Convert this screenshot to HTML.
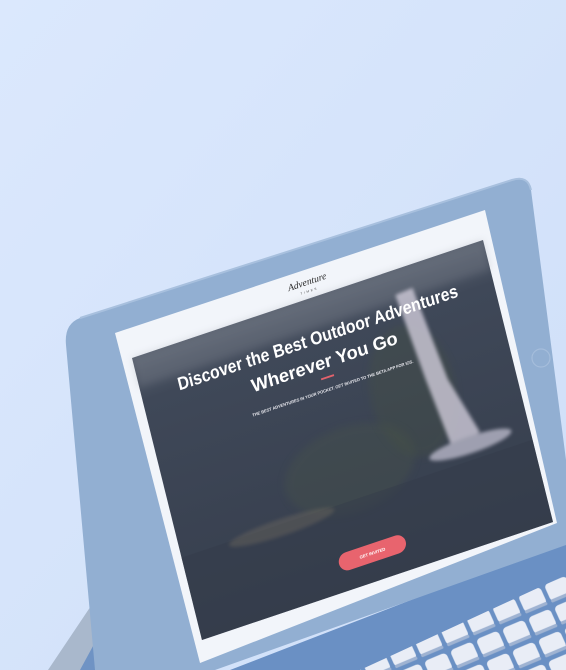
<!DOCTYPE html>
<html><head><meta charset="utf-8"><style>
html,body{margin:0;padding:0;width:566px;height:670px;overflow:hidden;background:#d7e5fc}
svg{display:block}
</style></head><body>
<svg width="566" height="670" viewBox="0 0 566 670" xmlns="http://www.w3.org/2000/svg">
<defs>
<linearGradient id="bg" x1="0" y1="0" x2="1" y2="1"><stop offset="0" stop-color="#dbe8fd"/><stop offset="1" stop-color="#cfdff8"/></linearGradient>
<linearGradient id="img" x1="0" y1="0" x2="0" y2="1"><stop offset="0" stop-color="#5a6270"/><stop offset="0.15" stop-color="#3f4858"/><stop offset="1" stop-color="#363e4d"/></linearGradient>
<filter id="bl" x="-50%" y="-50%" width="200%" height="200%"><feGaussianBlur stdDeviation="6"/></filter>
<filter id="bl2" x="-50%" y="-50%" width="200%" height="200%"><feGaussianBlur stdDeviation="3"/></filter>
<pattern id="keys" width="26" height="22" patternUnits="userSpaceOnUse" patternTransform="matrix(1,-0.42,0.45,1,0,0)"><rect x="2" y="2" width="22" height="17" rx="4" fill="#e9edf6"/><rect x="2" y="17" width="22" height="3" rx="1.5" fill="#9fb3d2"/></pattern>
</defs>
<rect width="566" height="670" fill="url(#bg)"/>
<!-- stand -->
<polygon points="48,670 105,585 128,575 140,670" fill="#a9b8cc"/>
<polygon points="80,670 118,600 140,600 150,670" fill="#6f93c4"/>
<!-- keyboard -->
<polygon points="230,670 566,540 566,670" fill="#6a90c4"/>
<polygon points="360,670 566,575 566,670" fill="url(#keys)"/>
<!-- tablet frame -->
<path d="M80,318 L512,180 Q528,175 531,190 L566,460 L566,545 L215,670 L95,670 L66,345 Q64,324 80,318 Z" fill="#92afd2"/>
<path d="M80,318 L512,180 Q528,175 531,190" fill="none" stroke="#a8c0de" stroke-width="2"/>
<circle cx="541" cy="358" r="9" fill="none" stroke="#a5bddb" stroke-width="1.2"/>
<!-- screen white -->
<polygon points="115,333 485,210 557,523 200,663" fill="#f2f5fa"/>
<!-- image -->
<g transform="matrix(0.585,-0.1967,0.1458,0.5875,132,358)">
<rect x="0" y="0" width="600" height="480" fill="url(#img)"/>
<rect x="0" y="0" width="600" height="50" fill="#8a8f9a" opacity="0.25" filter="url(#bl)"/>
<ellipse cx="300" cy="290" rx="110" ry="70" fill="#4a5548" opacity="0.35" filter="url(#bl)"/>
<ellipse cx="430" cy="200" rx="70" ry="110" fill="#46523f" opacity="0.3" filter="url(#bl)"/>
<g filter="url(#bl2)" opacity="0.8">
<polygon points="440,40 470,38 490,200 520,300 470,310 455,190" fill="#cfcbd9"/>
<ellipse cx="500" cy="315" rx="70" ry="14" fill="#b8b7c8"/>
</g>
<rect x="0" y="340" width="600" height="140" fill="#343c4a" opacity="0.5"/>
<ellipse cx="170" cy="345" rx="90" ry="14" fill="#7a7264" opacity="0.35" filter="url(#bl2)"/>
<text x="306" y="-22" text-anchor="middle" font-family="Liberation Serif,serif" font-style="italic" font-size="16" fill="#2a2a2a">Adventure</text>
<text x="306" y="-10" text-anchor="middle" font-family="Liberation Sans,sans-serif" font-size="5" letter-spacing="3" fill="#444">TIMES</text>
<text x="301" y="76" text-anchor="middle" font-family="Liberation Sans,sans-serif" font-weight="bold" font-size="30" fill="#fff" textLength="478" lengthAdjust="spacingAndGlyphs">Discover the Best Outdoor Adventures</text>
<text x="302" y="118" text-anchor="middle" font-family="Liberation Sans,sans-serif" font-weight="bold" font-size="30" fill="#fff">Wherever You Go</text>
<rect x="290" y="132" width="22" height="3" fill="#e2626c"/>
<text x="305" y="156" text-anchor="middle" font-family="Liberation Sans,sans-serif" font-weight="bold" font-size="7" fill="#e8e8ee" textLength="275" lengthAdjust="spacingAndGlyphs">THE BEST ADVENTURES IN YOUR POCKET. GET INVITED TO THE BETA APP FOR IOS.</text>
<rect x="246" y="418" width="114" height="30" rx="15" fill="#e8646e"/>
<text x="303" y="436" text-anchor="middle" font-family="Liberation Sans,sans-serif" font-weight="bold" font-size="7" fill="#fff">GET INVITED</text>
</g>
</svg>
</body></html>
